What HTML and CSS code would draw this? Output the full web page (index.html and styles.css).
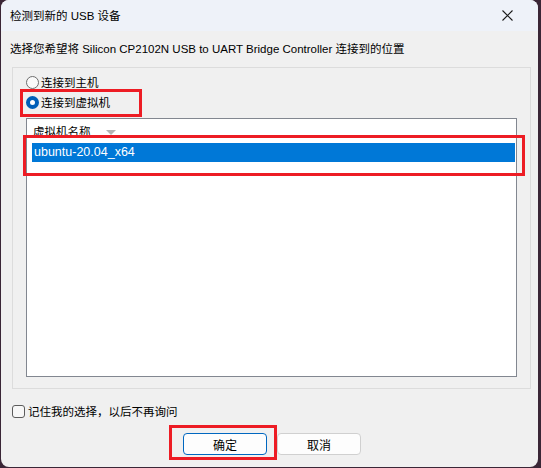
FILE: index.html
```html
<!DOCTYPE html>
<html lang="zh-CN">
<head>
    <meta charset="UTF-8">
    <title>检测到新的 USB 设备</title>
    <link rel="stylesheet" href="styles.css">
</head>
<body>
    <div class="window">
        <div class="titlebar">
            <span class="title">检测到新的 USB 设备</span>
            <svg class="close" width="11" height="11" viewBox="0 0 11 11">
                <path d="M0.5 0.5 L10.5 10.5 M10.5 0.5 L0.5 10.5" stroke="#1a1a1a" stroke-width="1.1" fill="none"/>
            </svg>
        </div>
        <div class="content">
            <p class="prompt">选择您希望将 Silicon CP2102N USB to UART Bridge Controller 连接到的位置</p>
            <div class="group">
                <label class="radio"><span class="dot"></span>连接到主机</label>
                <label class="radio checked"><span class="dot"></span>连接到虚拟机</label>
                <div class="list">
                    <div class="list-head">
                        <span>虚拟机名称</span>
                        <svg class="sort" width="10" height="5" viewBox="0 0 10 5"><path d="M0 0 L10 0 L5 5 Z" fill="#b4b4b4"/></svg>
                    </div>
                    <div class="row selected">ubuntu-20.04_x64</div>
                </div>
            </div>
            <label class="check"><span class="box"></span>记住我的选择，以后不再询问</label>
            <div class="buttons">
                <button class="btn primary">确定</button>
                <button class="btn">取消</button>
            </div>
        </div>
        <!-- red annotation boxes -->
        <div class="mark mark-radio"></div>
        <div class="mark mark-row"></div>
        <div class="mark mark-ok"></div>
    </div>
</body>
</html>
```

FILE: styles.css
```css
body {
    margin: 0;
    background: #3a2636;
    font-family: "Liberation Sans", "Noto Sans CJK SC", sans-serif;
    font-size: 11.5px;
    color: #000;
}
.window {
    position: relative;
    margin-left: 1px;
    width: 537px;
    height: 467px;
    background: #f0f0f0;
    border-radius: 8px;
    overflow: hidden;
    display: flex;
    flex-direction: column;
}
.titlebar {
    height: 31px;
    flex-shrink: 0;
    background: #eef2f9;
    display: flex;
    align-items: center;
    justify-content: space-between;
    padding: 0 25px 0 9px;
}
.title {
    line-height: 16px;
}
.close {
    display: block;
}
.content {
    padding: 0 7px 0 11px;
    display: flex;
    flex-direction: column;
}
.prompt {
    margin: 10px 0 0 -2px;
    line-height: 16px;
}
.group {
    margin-top: 10px;
    height: 316px;
    border: 1px solid #dcdcdc;
    padding: 4px 13px 0 13px;
    display: flex;
    flex-direction: column;
}
.radio {
    display: flex;
    align-items: center;
    height: 20px;
    gap: 2px;
}
.radio .dot {
    width: 11px;
    height: 11px;
    border: 1px solid #6e6e6e;
    border-radius: 50%;
    background: #fafafa;
}
.radio.checked .dot {
    width: 5px;
    height: 5px;
    border: 4px solid #005fb8;
    background: #fff;
}
.list {
    margin-top: 6px;
    height: 257px;
    flex-shrink: 0;
    background: #fff;
    border: 1px solid #828790;
}
.list-head {
    height: 24px;
    display: flex;
    align-items: center;
    padding-left: 6px;
}
.sort {
    margin-left: 15px;
    margin-top: 2px;
}
.row {
    margin: 0 1px 0 5px;
    height: 19px;
    line-height: 19px;
    padding-left: 2px;
    font-size: 12.5px;
}
.row.selected {
    background: #0078d7;
    color: #fff;
}
.check {
    margin-top: 15px;
    display: flex;
    align-items: center;
    gap: 3px;
    height: 14px;
}
.check .box {
    width: 11px;
    height: 11px;
    border: 1px solid #5c5c5c;
    border-radius: 3px;
    background: #f7f7f7;
}
.buttons {
    margin-top: 15px;
    display: flex;
    justify-content: center;
    gap: 10px;
    padding-left: 1px;
}
.btn {
    width: 84px;
    height: 22px;
    font: inherit;
    font-size: 12px;
    background: #fdfdfd;
    border: 1px solid #d0d0d0;
    border-radius: 4px;
    padding: 0;
}
.btn.primary {
    border-color: #0067c0;
}
.mark {
    position: absolute;
    border: 3px solid #ed1c24;
    box-sizing: border-box;
}
.mark-radio {
    left: 19px;
    top: 89px;
    width: 122px;
    height: 28px;
}
.mark-row {
    left: 22px;
    top: 135px;
    width: 502px;
    height: 41px;
}
.mark-ok {
    left: 168px;
    top: 425px;
    width: 108px;
    height: 35px;
}
```
